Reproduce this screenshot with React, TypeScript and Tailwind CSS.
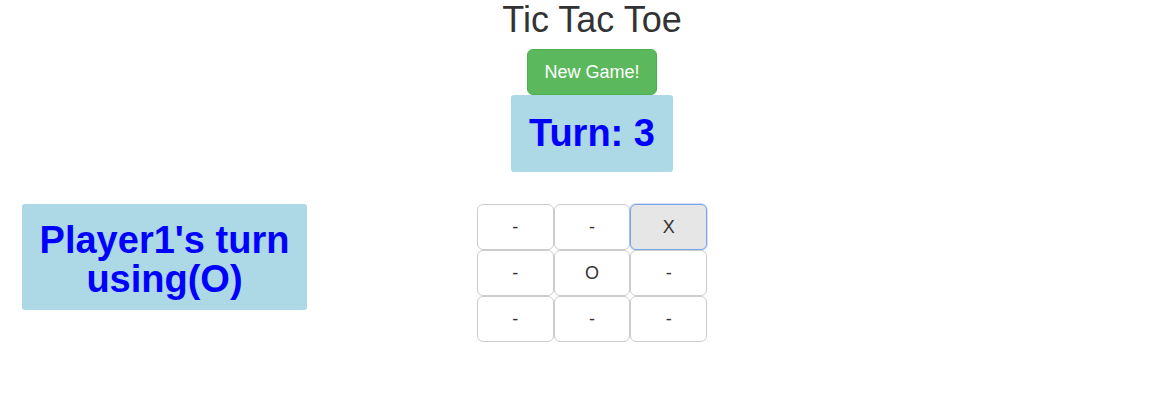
const cells = ["-", "-", "X", "-", "O", "-", "-", "-", "-"];

function Cell({ value, focused }: { value: string; focused?: boolean }) {
  return (
    <button
      type="button"
      className={`h-[46px] rounded-[6px] border text-[18px] leading-[24px] text-[#333] ${
        focused
          ? "border-[#7aa4ea] bg-[#e6e6e6] shadow-[0_0_0_1px_rgba(122,164,234,0.35)]"
          : "border-[#ccc] bg-white"
      }`}
    >
      {value}
    </button>
  );
}

export default function App() {
  return (
    <div className="min-h-[418px] bg-white font-['Liberation_Sans',Arial,sans-serif] text-[#333]">
      <div className="flex flex-col items-center pl-[23px]">
        <h1 className="text-[36px] leading-[1.1] font-normal">Tic Tac Toe</h1>
        <button
          type="button"
          className="mt-[9px] h-[46px] rounded-[6px] border border-[#4cae4c] bg-[#5cb85c] px-4 text-[18px] leading-[24px] text-white"
        >
          New Game!
        </button>
        <div className="flex h-[77px] w-[162px] items-center justify-center rounded-[3px] bg-[#add8e6] pt-[2px]">
          <span className="text-[38px] leading-[1.1] font-bold text-[#0000ff]">Turn: 3</span>
        </div>
      </div>

      <div className="mt-[32px] flex items-start">
        <div className="ml-[22px] w-[285px] rounded-[3px] bg-[#add8e6] pt-[17px] pb-[11px] text-center text-[38px] leading-[39px] font-bold text-[#0000ff]">
          Player1's turn
          <br />
          using(O)
        </div>
        <div className="ml-[170px] grid w-[230px] grid-cols-3">
          {cells.map((c, i) => (
            <Cell key={i} value={c} focused={i === 2} />
          ))}
        </div>
      </div>
    </div>
  );
}
